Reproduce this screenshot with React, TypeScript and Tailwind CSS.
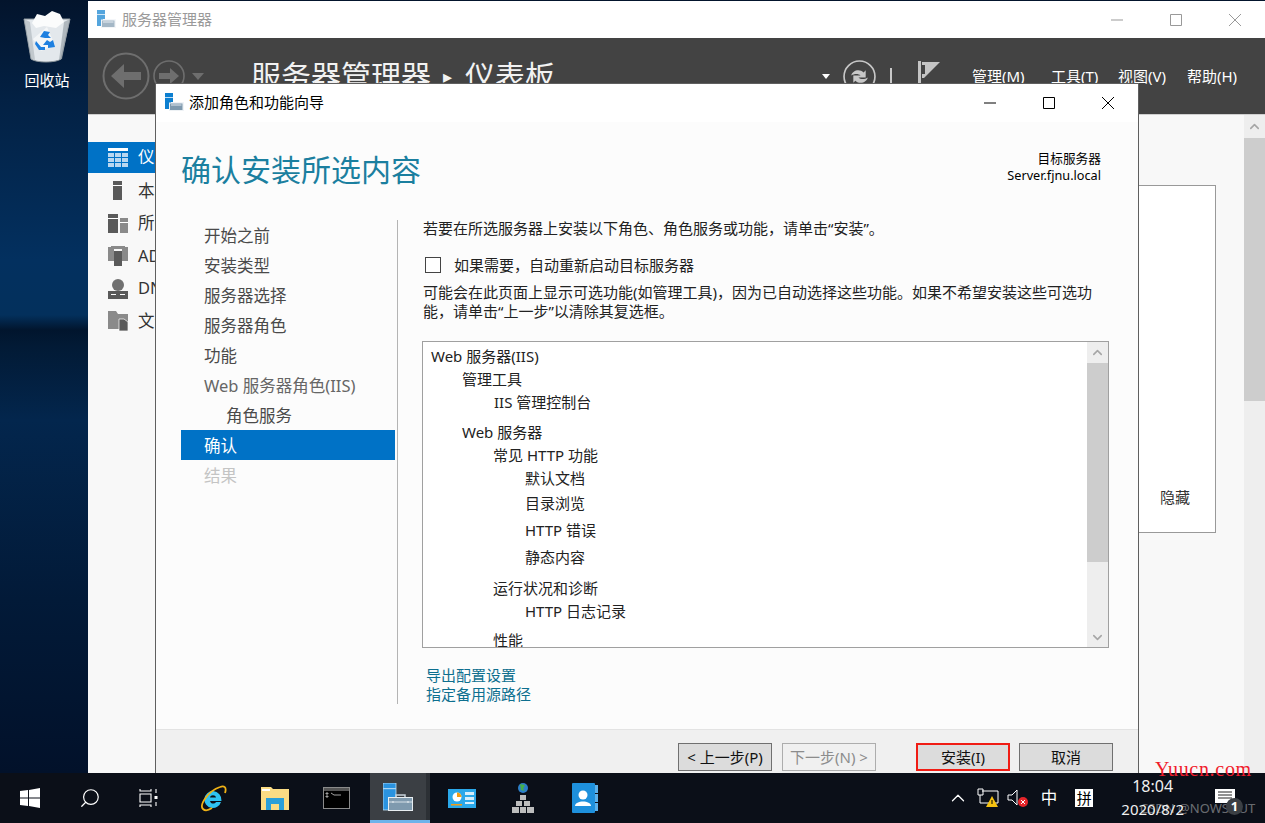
import { ChevronDown, ChevronUp, Search } from 'lucide-react'

const FONT = "[font-family:'Noto_Sans','Noto_Sans_CJK_SC',sans-serif]"

const navItems = [
  { label: '开始之前', cls: 'pl-[23px] text-[#4a4a4a]' },
  { label: '安装类型', cls: 'pl-[23px] text-[#4a4a4a]' },
  { label: '服务器选择', cls: 'pl-[23px] text-[#4a4a4a]' },
  { label: '服务器角色', cls: 'pl-[23px] text-[#4a4a4a]' },
  { label: '功能', cls: 'pl-[23px] text-[#4a4a4a]' },
  { label: 'Web 服务器角色(IIS)', cls: 'pl-[23px] text-[#666666]' },
  { label: '角色服务', cls: 'pl-[45px] text-[#4a4a4a]' },
  { label: '确认', cls: 'pl-[23px] bg-[#0072c6] text-white' },
  { label: '结果', cls: 'pl-[23px] text-[#c4c4c4]' },
]

const listRows = [
  { label: 'Web 服务器(IIS)', cls: 'pl-[8px]' },
  { label: '管理工具', cls: 'pl-[39px]' },
  { label: 'IIS 管理控制台', cls: 'pl-[71px]' },
  { label: 'Web 服务器', cls: 'pl-[39px] mt-[7px]' },
  { label: '常见 HTTP 功能', cls: 'pl-[70px]' },
  { label: '默认文档', cls: 'pl-[102px]' },
  { label: '目录浏览', cls: 'pl-[102px] mt-[2px]' },
  { label: 'HTTP 错误', cls: 'pl-[102px] mt-[4px]' },
  { label: '静态内容', cls: 'pl-[102px] mt-[4px]' },
  { label: '运行状况和诊断', cls: 'pl-[70px] mt-[8px]' },
  { label: 'HTTP 日志记录', cls: 'pl-[102px]' },
  { label: '性能', cls: 'pl-[70px] mt-[6px]' },
]

function ServerIcon({ className }: { className?: string }) {
  return (
    <svg viewBox="0 0 20 20" className={className}>
      <rect x="1" y="1" width="8" height="16" fill="#0c7fd0" />
      <rect x="1" y="5" width="8" height="1" fill="#bcdcf4" />
      <rect x="7" y="10" width="13" height="9" fill="#f2f5f8" />
      <rect x="5.5" y="11" width="13.5" height="7.5" fill="#7e99ae" stroke="#eef2f5" />
      <rect x="7" y="12.5" width="10.5" height="1" fill="#dfe7ed" />
    </svg>
  )
}

function ServerBig() {
  return (
    <svg viewBox="0 0 30 28" className="h-[28px] w-[30px]">
      <rect x="0" y="0" width="13" height="27" fill="#2a93e0" stroke="#bfe0f6" strokeWidth="0.8" />
      <rect x="0" y="5" width="13" height="1.2" fill="#a8d4f2" />
      <path d="M13 14v-2h9v2" fill="none" stroke="#c8d2da" strokeWidth="1.5" />
      <rect x="5.5" y="14.5" width="24" height="13" fill="#7f9aae" stroke="#e8eef2" />
      <path d="M6 19h23" stroke="#d5dfe6" />
      <path d="M10 18v2M25 18v2" stroke="#e8eef2" />
    </svg>
  )
}

function WinButtons({ color }: { color: string }) {
  return (
    <div className="flex items-center" style={{ color }}>
      <svg viewBox="0 0 14 14" className="h-[14px] w-[14px]"><path d="M1 7h12" stroke="currentColor" fill="none" /></svg>
      <svg viewBox="0 0 14 14" className="ml-[45px] h-[14px] w-[14px]"><path d="M1.5 1.5h11v11h-11z" stroke="currentColor" fill="none" /></svg>
      <svg viewBox="0 0 14 14" className="ml-[45px] h-[14px] w-[14px]"><path d="M1 1l12 12M13 1L1 13" stroke="currentColor" fill="none" /></svg>
    </div>
  )
}

function NavArrows() {
  return (
    <div className="flex items-center">
      <svg viewBox="0 0 48 48" className="h-[48px] w-[48px]">
        <circle cx="24" cy="24" r="22.5" fill="none" stroke="#6e6e6e" strokeWidth="2" />
        <path d="M9 24l13-12v8h17v8H22v8z" fill="#6e6e6e" />
      </svg>
      <svg viewBox="0 0 32 32" className="ml-[3px] h-[32px] w-[32px]">
        <circle cx="16" cy="16" r="15" fill="none" stroke="#6e6e6e" strokeWidth="1.6" />
        <path d="M26 16l-9-8v5H6v6h11v5z" fill="#6e6e6e" />
      </svg>
      <div className="ml-[7px] h-0 w-0 border-x-[6px] border-t-[7px] border-x-transparent border-t-[#6e6e6e]" />
    </div>
  )
}

function RefreshIcon() {
  return (
    <svg viewBox="0 0 32 32" className="h-[33px] w-[33px]">
      <circle cx="16" cy="16" r="15" fill="none" stroke="#c8c8c8" strokeWidth="1.6" />
      <path d="M8 15c1-5 8-7 12-3l2-2v7h-7l2-2c-2-2-6-2-9 0zM24 17c-1 5-8 7-12 3l-2 2v-7h7l-2 2c2 2 6 2 9 0z" fill="#c8c8c8" />
    </svg>
  )
}

function FlagIcon() {
  return (
    <svg viewBox="0 0 22 26" className="h-[26px] w-[22px]">
      <path d="M0 0h3v26H0zM4 1h18L6 17H4z" fill="#c4c4c4" />
      <path d="M4 4h3v9H4z" fill="#434343" />
    </svg>
  )
}

function SideIcon({ kind }: { kind: number }) {
  if (kind === 0)
    return (
      <svg viewBox="0 0 20 20" className="h-[20px] w-[20px]">
        <path d="M0 0h20v3H0z" fill="#fff" />
        <path d="M0 5h6v4H0zM7 5h6v4H7zM14 5h6v4h-6zM0 10h6v4H0zM7 10h6v4H7zM14 10h6v4h-6zM0 15h6v4H0zM7 15h6v4H7zM14 15h6v4h-6z" fill="#b9d7f0" />
      </svg>
    )
  if (kind === 1)
    return (
      <svg viewBox="0 0 20 20" className="h-[20px] w-[20px]">
        <path d="M5 0h9v19H5z" fill="#5a5a5a" />
        <path d="M5 4h9v1H5z" fill="#fff" />
      </svg>
    )
  if (kind === 2)
    return (
      <svg viewBox="0 0 20 20" className="h-[20px] w-[20px]">
        <path d="M0 0h10v19H0z" fill="#5a5a5a" />
        <path d="M12 4h8v15h-8z" fill="#8a8a8a" />
        <path d="M0 4h10v1H0zM12 8h8v1h-8z" fill="#fff" />
      </svg>
    )
  if (kind === 3)
    return (
      <svg viewBox="0 0 20 20" className="h-[20px] w-[20px]">
        <path d="M0 1h6v14H0zM14 1h6v14h-6z" fill="#8a8a8a" />
        <path d="M6 5h8v15H6z" fill="#5a5a5a" />
        <path d="M3 0h14v3H3z" fill="#8a8a8a" />
      </svg>
    )
  if (kind === 4)
    return (
      <svg viewBox="0 0 20 20" className="h-[20px] w-[20px]">
        <circle cx="10" cy="6" r="6" fill="#707070" />
        <path d="M0 12h20v8H0z" fill="#5a5a5a" />
        <path d="M3 15h5v1H3zM12 15h5v1h-5z" fill="#fff" />
      </svg>
    )
  return (
    <svg viewBox="0 0 20 20" className="h-[20px] w-[20px]">
      <path d="M0 0h8l2 3h10v15H0z" fill="#8a8a8a" />
      <path d="M11 8h5l4 3v9h-9z" fill="#5a5a5a" stroke="#fff" strokeWidth="0.7" />
    </svg>
  )
}

function RecycleBin() {
  return (
    <svg viewBox="0 0 48 54" className="h-[54px] w-[48px]">
      <path d="M1 10l7 40c5 4 25 4 30 0l9-40z" fill="#e3e8ec" stroke="#8d969c" />
      <path d="M9 14l5-9 8 2 7-5 8 3 4 8-8 6-12-2-8 2z" fill="#fbfcfc" />
      <path d="M1 10l6 3 5 38-4-1z" fill="#aab3b9" opacity="0.6" />
      <path d="M47 10l-6 3-5 38 3-1z" fill="#9aa4ab" opacity="0.7" />
      <path d="M24 18l8 18-14 6-8-12z" fill="#f4f6f7" />
      <path d="M17 28l4-6 6 1-2 3 3 3-6 0zM30 31l2 7-7 1v-3l-5 0 4-5 3 2zM13 32l5 6h4v3l-6 0-4-6z" fill="#1e80e0" />
    </svg>
  )
}

function Btn({ label, cls }: { label: string; cls: string }) {
  return (
    <div className={`flex h-[28px] w-[94px] items-center justify-center text-[15px] ${cls}`}>
      {label}
    </div>
  )
}

function Wizard() {
  return (
    <div className="absolute left-[155px] top-[83px] flex h-[690px] w-[984px] flex-col border-x border-t border-[#5f5f5f] bg-white">
      <div className="flex h-[38px] shrink-0 items-center justify-between pl-[8px] pr-[23px]">
        <div className="flex items-center gap-[5px] pb-[2px]">
          <ServerIcon className="h-[20px] w-[20px]" />
          <span className="text-[15px] text-black">添加角色和功能向导</span>
        </div>
        <WinButtons color="#000000" />
      </div>

      <div className="flex min-h-0 flex-1 flex-col bg-[#fcfcfc]">
        <div className="flex h-[98px] shrink-0 justify-between pl-[25px] pr-[37px]">
          <h1 className="mt-[26px] text-[30px] font-normal leading-[44px] text-[#1b7f9f]">确认安装所选内容</h1>
          <div className="mt-[28px] text-right text-[12.7px] leading-[17px] text-black">
            <div>目标服务器</div>
            <div>Server.fjnu.local</div>
          </div>
        </div>

        <div className="flex pl-[25px]">
          <div className="w-[214px] shrink-0">
            {navItems.map((n) => (
              <div key={n.label} className={`flex h-[30px] items-center pt-[2px] text-[16.5px] ${n.cls}`}>
                {n.label}
              </div>
            ))}
          </div>
          <div className="ml-[2px] h-[484px] w-[1px] shrink-0 bg-[#b4b4b4]" />

          <div className="ml-[25px] flex w-[688px] flex-col text-[#222222]">
            <p className="h-[16px] whitespace-nowrap text-[15px] leading-[16px]">若要在所选服务器上安装以下角色、角色服务或功能，请单击“安装”。</p>
            <div className="mt-[20px] flex h-[18px] items-center pl-[2px]">
              <div className="h-[16px] w-[16px] border border-[#444444] bg-white" />
              <span className="ml-[13px] text-[15px]">如果需要，自动重新启动目标服务器</span>
            </div>
            <p className="mt-[9px] w-[675px] text-[15px] leading-[19px]">
              可能会在此页面上显示可选功能(如管理工具)，因为已自动选择这些功能。如果不希望安装这些可选功能，请单击“上一步”以清除其复选框。
            </p>

            <div className="-ml-[1px] mt-[20px] flex h-[307px] w-[687px] border border-[#a0a0a0] bg-white">
              <div className="min-w-0 flex-1 overflow-hidden pt-[3px] text-[15px] text-[#222222]">
                {listRows.map((r) => (
                  <div key={r.label} className={`flex h-[23px] items-center ${r.cls}`}>
                    {r.label}
                  </div>
                ))}
              </div>
              <div className="flex w-[21px] shrink-0 flex-col bg-[#eeeeee]">
                <div className="flex h-[21px] items-center justify-center"><ChevronUp size={15} strokeWidth={2.5} color="#a6a6a6" /></div>
                <div className="h-[199px] bg-[#cdcdcd]" />
                <div className="flex-1" />
                <div className="flex h-[20px] items-center justify-center"><ChevronDown size={15} strokeWidth={2.5} color="#a6a6a6" /></div>
              </div>
            </div>

            <div className="mt-[18px] pl-[3px] text-[15px] leading-[19px] text-[#0d6f8f]">
              <div>导出配置设置</div>
              <div>指定备用源路径</div>
            </div>
          </div>
        </div>
      </div>

      <div className="flex h-[44px] shrink-0 items-start border-t border-[#e3e3e3] bg-[#f0f0f0] pl-[522px] pt-[13px]">
        <Btn label="< 上一步(P)" cls="border border-[#707070] bg-[#dcdcdc] text-[#111111]" />
        <Btn label="下一步(N) >" cls="ml-[10px] border border-[#adadad] bg-[#f0f0f0] text-[#8c8c8c]" />
        <Btn label="安装(I)" cls="ml-[40px] border-2 border-[#f01c14] bg-[#dcdcdc] text-[#111111]" />
        <Btn label="取消" cls="ml-[9px] border border-[#707070] bg-[#dcdcdc] text-[#111111]" />
      </div>
    </div>
  )
}

function ServerManager() {
  const sideRows = ['仪表板', '本地服务器', '所有服务器', 'AD DS', 'DNS', '文件和存储服务']
  return (
    <div className="absolute left-[88px] top-[1px] flex h-[772px] w-[1177px] flex-col bg-[#f8f8f8]">
      <div className="flex h-[37px] shrink-0 items-center justify-between bg-white pl-[8px] pr-[23px]">
        <div className="flex items-center gap-[6px] pb-[1px]">
          <ServerIcon className="h-[20px] w-[20px] opacity-70" />
          <span className="text-[15px] text-[#9a9a9a]">服务器管理器</span>
        </div>
        <WinButtons color="#999999" />
      </div>

      <div className="flex h-[77px] shrink-0 items-center border-b border-[#cfcfcf] bg-[#434343] pl-[14px] pr-[27px] text-white">
        <NavArrows />
        <div className="ml-[47px] flex items-center whitespace-nowrap text-[30px] leading-[44px] text-[#f2f2f2]">
          <span>服务器管理器</span>
          <span className="ml-[12px] mr-[12px] w-[10px] text-[18px]">▸</span>
          <span>仪表板</span>
        </div>
        <div className="ml-auto flex items-center">
          <div className="h-0 w-0 border-x-[4px] border-t-[5px] border-x-transparent border-t-white" />
          <div className="ml-[13px]"><RefreshIcon /></div>
          <div className="ml-[14px] h-[16px] w-[2px] bg-[#c8c8c8]" />
          <div className="ml-[26px] -mt-[4px]"><FlagIcon /></div>
          <div className="ml-[32px] flex whitespace-nowrap text-[15px]">
            <span className="w-[79px]">管理(M)</span>
            <span className="w-[67px]">工具(T)</span>
            <span className="w-[69px]">视图(V)</span>
            <span className="w-[51px]">帮助(H)</span>
          </div>
        </div>
      </div>

      <div className="flex min-h-0 flex-1">
        <div className="w-[67px] shrink-0 pt-[27px]">
          {sideRows.map((s, i) => (
            <div
              key={s}
              className={`flex items-center overflow-hidden whitespace-nowrap pl-[20px] text-[16.5px] ${
                i === 0 ? 'mb-[2px] h-[31px] bg-[#0072c6] text-white' : 'h-[32.5px] text-[#333333]'
              }`}
            >
              <span className="w-[30px] shrink-0"><SideIcon kind={i} /></span>
              <span>{s}</span>
            </div>
          ))}
        </div>
      </div>
    </div>
  )
}

function SmPanel() {
  return (
    <div className="absolute left-[1139px] top-[115px] flex h-[658px] w-[126px]">
      <div className="flex-1 pt-[70px]">
        <div className="flex h-[348px] w-[77px] items-end border-y border-r border-[#999999] bg-white pb-[24px] pl-[21px] text-[15px] text-[#333333]">
          <span>隐藏</span>
        </div>
      </div>
      <div className="flex w-[21px] shrink-0 flex-col bg-[#eeeeee]">
        <div className="flex h-[23px] items-center justify-center"><ChevronUp size={15} strokeWidth={2.5} color="#a6a6a6" /></div>
        <div className="h-[263px] bg-[#cdcdcd]" />
      </div>
    </div>
  )
}

function Taskbar() {
  return (
    <div className="absolute bottom-0 left-0 flex h-[50px] w-[1265px] items-center bg-[#0b0f18] text-white">
      <div className="flex h-full w-[60px] items-center justify-center">
        <svg viewBox="0 0 20 20" className="h-[20px] w-[20px]">
          <path d="M0 3l8-1v7.5H0zM9 2l11-2v9.5H9zM0 10.5h8V18l-8-1zM9 10.5h11V20L9 18z" fill="#fff" />
        </svg>
      </div>
      <div className="flex h-full w-[60px] items-center justify-center">
        <Search size={22} strokeWidth={1.3} className="-scale-x-100" />
      </div>
      <div className="flex h-full w-[58px] items-center justify-center">
        <svg viewBox="0 0 20 20" className="h-[20px] w-[20px]">
          <path d="M1 1v2h11V1M1 6h11v8H1zM1 19v-2h11v2M17 1v4M17 14v4" stroke="#fff" fill="none" strokeWidth="1.1" />
          <rect x="15.5" y="8" width="3" height="3" fill="#fff" />
        </svg>
      </div>
      <div className="flex h-full w-[70px] items-center justify-center">
        <svg viewBox="0 0 28 28" className="h-[28px] w-[28px]">
          <path d="M14 7a8.5 8.5 0 1 0 8 11h-5c-1.500 2.500-5.500 2-6-1h11.500a9 9 0 0 0-8.500-10zM11 13.500c.5-3 5.500-3 6 0z" fill="#2ec2f2" fillRule="evenodd" />
          <path d="M4 25C0 21 9 7 21 3c4-1.500 7 0 5 6M4 25c2 2 6 1 9-1" stroke="#f0b216" strokeWidth="1.8" fill="none" />
        </svg>
      </div>
      <div className="flex h-full w-[54px] items-center justify-center">
        <svg viewBox="0 0 28 24" className="h-[24px] w-[28px]">
          <path d="M0 1h10l2 2h16v21H0z" fill="#fbdc84" />
          <path d="M1 3h8v2H1z" fill="#fff" />
          <path d="M5 24V12h18v12h-5v-6h-8v6z" fill="#2a9fd8" />
        </svg>
      </div>
      <div className="flex h-full w-[68px] items-center justify-center">
        <svg viewBox="0 0 27 22" className="h-[22px] w-[27px]">
          <rect x="0.5" y="0.5" width="26" height="21" fill="#000" stroke="#8a8a8a" />
          <path d="M1 1h25v3H1z" fill="#555" />
          <path d="M3 6h2v1H3zM3 9h2v1H3zM8 6l3 2h7" stroke="#ccc" fill="none" strokeWidth="0.8" />
        </svg>
      </div>
      <div className="flex h-full w-[60px]">
        <div className="flex h-full w-[56px] items-center justify-center border-b-[3px] border-[#6db3ea] bg-[#3b3f44]">
          <ServerBig />
        </div>
        <div className="h-full w-[4px] border-b-[3px] border-[#6db3ea] bg-[#2c3035]" />
      </div>
      <div className="flex h-full w-[64px] items-center justify-center">
        <svg viewBox="0 0 28 19" className="h-[19px] w-[28px]">
          <rect width="28" height="19" fill="#2aa8ea" />
          <circle cx="9" cy="8" r="4.5" fill="#fff" />
          <path d="M9 8V3.500a4.500 4.500 0 0 1 4.500 4.500z" fill="#f39c12" />
          <path d="M17 3h9v3h-9zM17 8h9v3h-9zM17 13h9v2h-9z" fill="#d5eefb" />
          <path d="M3 15h11v1.500H3z" fill="#f39c12" />
        </svg>
      </div>
      <div className="flex h-full w-[58px] items-center justify-center">
        <svg viewBox="0 0 22 30" className="h-[30px] w-[22px]">
          <circle cx="11" cy="5" r="5" fill="#2c7fc9" />
          <path d="M8 1l5 1-2 4 2 2-4-1z" fill="#46b04a" />
          <path d="M8 12h6v5H8zM4 18h6v5H4zM12 18h6v5h-6zM0 24h7v6H0zM8 24h6v6H8zM15 24h7v6h-7z" fill="#bdbdbd" />
        </svg>
      </div>
      <div className="flex h-full w-[66px] items-center justify-center">
        <svg viewBox="0 0 26 30" className="h-[30px] w-[26px]">
          <rect width="23" height="30" fill="#1e90dc" rx="1" />
          <path d="M23 2h3v8h-3zM23 11h3v8h-3zM23 20h3v8h-3z" fill="#5cb0ea" />
          <circle cx="11" cy="12" r="4.500" fill="#fff" />
          <path d="M3 23c0-6 16-6 16 0z" fill="#fff" />
        </svg>
      </div>

      <div className="ml-auto flex h-full items-center">
        <ChevronUp size={22} strokeWidth={1.4} className="mr-[8px]" />
        <svg viewBox="0 0 22 20" className="mr-[8px] h-[20px] w-[22px]">
          <path d="M5 3h16v12H7M1 1h5v6H1zM3 7v8h4" stroke="#fff" fill="none" />
          <path d="M15 8l6 11H9z" fill="#f5c211" />
          <path d="M15 12v4" stroke="#000" />
        </svg>
        <svg viewBox="0 0 22 18" className="mr-[12px] h-[18px] w-[22px]">
          <path d="M1 6h4l5-5v15l-5-5H1z" stroke="#fff" fill="none" />
          <circle cx="16" cy="13" r="5" fill="#e5252a" />
          <path d="M14 11l4 4M18 11l-4 4" stroke="#fff" />
        </svg>
        <span className="mr-[18px] text-[16.5px] leading-none">中</span>
        <div className="mr-[28px] flex h-[18px] w-[18px] items-center justify-center bg-white text-[15px] leading-none text-black">拼</div>
        <div className="mr-[31px] text-center text-[15px] leading-[23px] text-[#f0f0f0]">
          <div className="text-[16px]">18:04</div>
          <div>2020/8/2</div>
        </div>
        <svg viewBox="0 0 20 18" className="mr-[30px] h-[18px] w-[20px]">
          <path d="M0 0h20v14H0z" fill="#fff" />
          <path d="M3 3h14M3 6h14M3 9h14" stroke="#222" />
        </svg>
      </div>
    </div>
  )
}

export default function App() {
  return (
    <div className={`relative h-[823px] w-[1265px] overflow-hidden bg-[linear-gradient(180deg,#03142c_0px,#032144_100px,#03305f_260px,#03305c_315px,#01152d_330px,#021a35_345px,#03264d_420px,#021a38_600px,#02112a_773px)] ${FONT}`}>
      <div className="flex w-[94px] flex-col items-center pt-[9px]">
        <RecycleBin />
        <span className="mt-[6px] text-[15px] text-white">回收站</span>
      </div>
      <ServerManager />
      <SmPanel />
      <Wizard />
      <Taskbar />
      {/* watermarks sit over the taskbar */}
      <span className="absolute left-[1155px] top-[757px] text-[20px] leading-[24px] tracking-[0.7px] text-[#f01c2c] [font-family:'Liberation_Serif',serif]">Yuucn.com</span>
      <span className="absolute left-[1140px] top-[800px] text-[13px] leading-[16px] text-[#ffffff66]">CSDN @NOWSHUT</span>
      <div className="absolute left-[1226px] top-[798px] flex h-[17px] w-[17px] items-center justify-center rounded-full bg-[#3b3f44] text-[13px] font-bold text-white">1</div>
    </div>
  )
}
